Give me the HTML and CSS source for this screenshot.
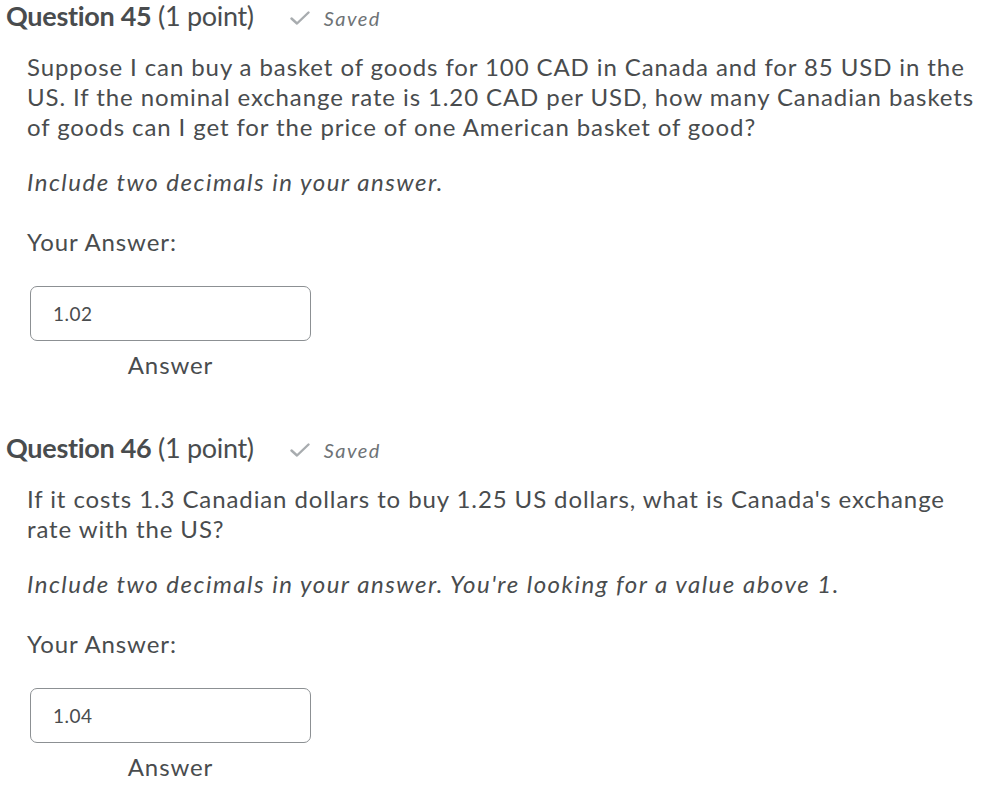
FILE: index.html
```html
<!DOCTYPE html>
<html lang="en">
<head>
  <meta charset="UTF-8">
  <meta name="viewport" content="width=device-width, initial-scale=1.0">
  <title>Quiz</title>
  <link rel="stylesheet" href="styles.css">
</head>
<body>
  <div class="question">
    <h2 class="question-head">
      <span class="q-title"><strong>Question 45</strong> (1 point)</span>
      <span class="saved">
        <svg class="check" width="20" height="16" viewBox="0 0 20 16"><path d="M1.5 8.5 L7 13.5 L18.5 2.5" fill="none" stroke="#a8acaf" stroke-width="2.4" stroke-linecap="round" stroke-linejoin="round"/></svg>
        Saved
      </span>
    </h2>
    <div class="question-body">
      <p>Suppose I can buy a basket of goods for 100 CAD in Canada and for 85 USD in the US. If the nominal exchange rate is 1.20 CAD per USD, how many Canadian baskets of goods can I get for the price of one American basket of good?</p>
      <p class="hint">Include two decimals in your answer.</p>
      <label class="answer-label" for="answer-45">Your Answer:</label>
      <div class="answer-field">
        <input type="text" id="answer-45" value="1.02">
        <span class="answer-caption">Answer</span>
      </div>
    </div>
  </div>

  <div class="question">
    <h2 class="question-head">
      <span class="q-title"><strong>Question 46</strong> (1 point)</span>
      <span class="saved">
        <svg class="check" width="20" height="16" viewBox="0 0 20 16"><path d="M1.5 8.5 L7 13.5 L18.5 2.5" fill="none" stroke="#a8acaf" stroke-width="2.4" stroke-linecap="round" stroke-linejoin="round"/></svg>
        Saved
      </span>
    </h2>
    <div class="question-body">
      <p>If it costs 1.3 Canadian dollars to buy 1.25 US dollars, what is Canada's exchange rate with the US?</p>
      <p class="hint">Include two decimals in your answer. You're looking for a value above 1.</p>
      <label class="answer-label" for="answer-46">Your Answer:</label>
      <div class="answer-field">
        <input type="text" id="answer-46" value="1.04">
        <span class="answer-caption">Answer</span>
      </div>
    </div>
  </div>
</body>
</html>
```

FILE: styles.css
```css
* {
  box-sizing: border-box;
  margin: 0;
  padding: 0;
}
body {
  font-family: Lato, 'Open Sans', sans-serif;
  font-variant-ligatures: none;
  color: #494c4e;
  background: #fff;
  padding: 0 6px;
}
.question {
  padding-bottom: 52px;
}
.question:last-child {
  padding-bottom: 0;
}
.question-head {
  display: flex;
  align-items: baseline;
  font-size: 27px;
  line-height: 32px;
  font-weight: normal;
  letter-spacing: -0.3px;
  color: #494c4e;
}
.question-head strong {
  font-weight: bold;
}
.saved {
  display: flex;
  align-items: baseline;
  margin-left: 36px;
  font-size: 20px;
  font-style: italic;
  letter-spacing: 1.4px;
  color: #6e7376;
}
.check {
  margin-right: 14px;
  align-self: center;
}
.question-body {
  padding: 18px 0 0 21px;
  font-size: 24px;
  line-height: 30px;
  letter-spacing: 0.9px;
}
.question-body p {
  margin-bottom: 25px;
}
.hint {
  font-style: italic;
  letter-spacing: 1.5px;
}
.answer-label {
  display: block;
  margin-top: 30px;
}
.answer-field {
  display: inline-flex;
  flex-direction: column;
  align-items: center;
  margin: 29px 0 0 3px;
}
.answer-field input {
  width: 281px;
  height: 55px;
  border: 1px solid #8c9093;
  border-radius: 7px;
  padding: 0 22px;
  font-family: Lato, sans-serif;
  font-size: 19px;
  letter-spacing: 0.5px;
  color: #494c4e;
  background: #fff;
}
.answer-caption {
  margin-top: 9px;
}
```
